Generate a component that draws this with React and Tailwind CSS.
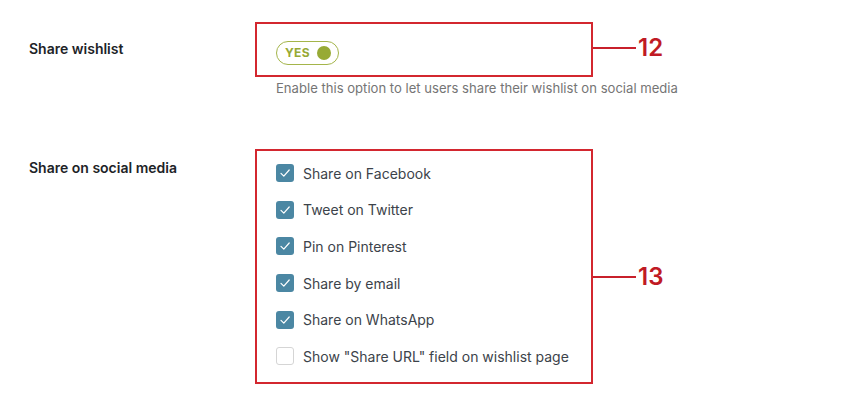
import React, { useState } from "react";

const options = [
  { id: "facebook", label: "Share on Facebook", checked: true },
  { id: "twitter", label: "Tweet on Twitter", checked: true },
  { id: "pinterest", label: "Pin on Pinterest", checked: true },
  { id: "email", label: "Share by email", checked: true },
  { id: "whatsapp", label: "Share on WhatsApp", checked: true },
  { id: "url", label: 'Show "Share URL" field on wishlist page', checked: false },
];

// red callout line + number to the right of a highlighted box
const Callout = ({ num, offset }) => (
  <div className={`flex items-center ${offset}`}>
    <div className="w-[43px] h-[2px] bg-[#c8202b]" />
    <span className="ml-[2px] text-[24px] leading-[24px] font-semibold text-[#c01a24]">
      {num}
    </span>
  </div>
);

const Check = ({ checked }) =>
  checked ? (
    <span className="w-[18px] h-[18px] rounded-[3px] bg-[#4b87a3] flex items-center justify-center">
      <svg width="18" height="18" viewBox="0 0 18 18" fill="none">
        <path d="M5 9.4 L7.8 12.2 L13.2 6" stroke="#fff" strokeWidth="1.2" strokeLinecap="round" strokeLinejoin="round" />
      </svg>
    </span>
  ) : (
    <span className="w-[18px] h-[18px] rounded-[3px] border border-[#d5d5d5] bg-white" />
  );

export default function App() {
  const [items, setItems] = useState(options);
  const [shareOn, setShareOn] = useState(true);

  const toggle = (id) =>
    setItems((prev) => prev.map((o) => (o.id === id ? { ...o, checked: !o.checked } : o)));

  return (
    <div className="w-[863px] h-[402px] bg-white font-['Inter',sans-serif] pt-[22px]">
      {/* Share wishlist */}
      <div className="flex">
        <div className="w-[255px] pl-[29px] pt-[17px] text-[14px] leading-[20px] font-semibold text-[#1d2327]">
          Share wishlist
        </div>
        <div className="flex flex-col">
          <div className="flex items-start">
            <div className="w-[338px] h-[55px] border-2 border-[#d3272f] pl-[19px] pt-[17px]">
              <button
                onClick={() => setShareOn(!shareOn)}
                className="w-[63px] h-[24px] rounded-full border border-[#a4b54a] flex items-center justify-between pl-[8px] pr-[7px]"
              >
                <span className="text-[12px] font-bold tracking-[0.3px] text-[#97aa35]">
                  {shareOn ? "YES" : "NO"}
                </span>
                <span className="w-[14px] h-[14px] rounded-full bg-[#97aa35]" />
              </button>
            </div>
            <Callout num="12" offset="mt-[14px]" />
          </div>
          <p className="mt-[2px] pl-[21px] text-[13.1px] leading-[18px] text-[#757575]">
            Enable this option to let users share their wishlist on social media
          </p>
        </div>
      </div>

      {/* Share on social media */}
      <div className="flex mt-[52px]">
        <div className="w-[255px] pl-[29px] pt-[9px] text-[14px] leading-[20px] font-semibold text-[#1d2327]">
          Share on social media
        </div>
        <div className="flex items-start">
          <div className="w-[338px] h-[235px] border-2 border-[#d3272f] pl-[19px] pt-[4px]">
            {items.map((o) => (
              <label
                key={o.id}
                onClick={() => toggle(o.id)}
                className="h-[36.6px] flex items-center gap-[9px] cursor-pointer"
              >
                <Check checked={o.checked} />
                <span className="text-[14px] text-[#3c434a]">{o.label}</span>
              </label>
            ))}
          </div>
          <Callout num="13" offset="mt-[116px]" />
        </div>
      </div>
    </div>
  );
}
